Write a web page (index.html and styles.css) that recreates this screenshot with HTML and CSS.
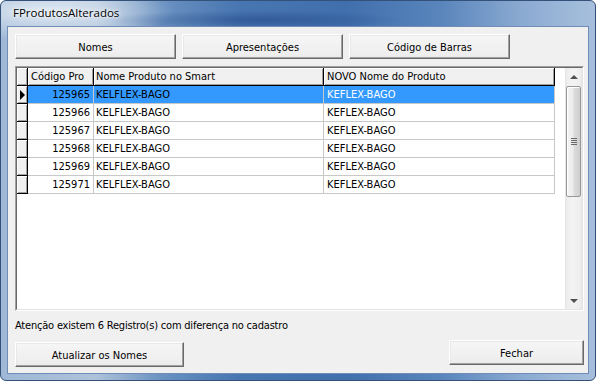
FILE: index.html
```html
<!DOCTYPE html>
<html lang="pt-BR">
<head>
<meta charset="utf-8">
<title>FProdutosAlterados</title>
<link rel="stylesheet" href="styles.css">
</head>
<body>
<div class="window">
  <div class="titlebar">
    <span class="title">FProdutosAlterados</span>
  </div>
  <div class="client">
    <div class="toolbar">
      <button class="btn btn-tab">Nomes</button>
      <button class="btn btn-tab">Apresentações</button>
      <button class="btn btn-tab">Código de Barras</button>
    </div>
    <div class="grid">
      <div class="grid-inner">
        <div class="grid-body">
          <div class="row head">
            <div class="cell ind fixed"></div>
            <div class="cell c-code fixed">Código Pro</div>
            <div class="cell c-name fixed">Nome Produto no Smart</div>
            <div class="cell c-new fixed">NOVO Nome do Produto</div>
          </div>
          <div class="row sel">
            <div class="cell ind fixed"><span class="pointer"></span></div>
            <div class="cell c-code num">125965</div>
            <div class="cell c-name">KELFLEX-BAGO</div>
            <div class="cell c-new">KEFLEX-BAGO</div>
          </div>
          <div class="row">
            <div class="cell ind fixed"></div>
            <div class="cell c-code num">125966</div>
            <div class="cell c-name">KELFLEX-BAGO</div>
            <div class="cell c-new">KEFLEX-BAGO</div>
          </div>
          <div class="row">
            <div class="cell ind fixed"></div>
            <div class="cell c-code num">125967</div>
            <div class="cell c-name">KELFLEX-BAGO</div>
            <div class="cell c-new">KEFLEX-BAGO</div>
          </div>
          <div class="row">
            <div class="cell ind fixed"></div>
            <div class="cell c-code num">125968</div>
            <div class="cell c-name">KELFLEX-BAGO</div>
            <div class="cell c-new">KEFLEX-BAGO</div>
          </div>
          <div class="row">
            <div class="cell ind fixed"></div>
            <div class="cell c-code num">125969</div>
            <div class="cell c-name">KELFLEX-BAGO</div>
            <div class="cell c-new">KEFLEX-BAGO</div>
          </div>
          <div class="row">
            <div class="cell ind fixed"></div>
            <div class="cell c-code num">125971</div>
            <div class="cell c-name">KELFLEX-BAGO</div>
            <div class="cell c-new">KEFLEX-BAGO</div>
          </div>
        </div>
        <div class="vscroll">
          <div class="sb-btn"><span class="arrow-up"></span></div>
          <div class="sb-track">
            <div class="thumb"><span class="grip"></span></div>
          </div>
          <div class="sb-btn"><span class="arrow-down"></span></div>
        </div>
      </div>
    </div>
    <div class="status">Atenção existem 6 Registro(s) com diferença no cadastro</div>
    <div class="bottom">
      <button class="btn btn-update">Atualizar os Nomes</button>
      <button class="btn btn-close">Fechar</button>
    </div>
  </div>
</div>
</body>
</html>
```

FILE: styles.css
```css
html, body {
  margin: 0;
  padding: 0;
}

body {
  width: 596px;
  height: 381px;
  overflow: hidden;
  background: #ffffff;
  font-family: "DejaVu Sans Condensed", "Liberation Sans", sans-serif;
  font-size: 11px;
  color: #000;
}

.window {
  width: 596px;
  height: 381px;
  box-sizing: border-box;
  display: flex;
  flex-direction: column;
  border: 1px solid #34517a;
  border-radius: 6px;
  padding: 0 6px 6px 6px;
  overflow: hidden;
  background:
    radial-gradient(ellipse 150px 10px at 255px 19px, rgba(25, 60, 125, 0.45), rgba(25, 60, 125, 0) 100%),
    radial-gradient(ellipse 130px 30px at 45px 10px, rgba(230, 238, 246, 0.9), rgba(230, 238, 246, 0) 100%),
    linear-gradient(90deg, #9fb8d6 0%, #aec2da 16%, #6a91c1 27%, #4876b1 40%, #416fac 58%, #5985bc 74%, #8cabd2 88%, #a7bfdc 100%);
}

.titlebar {
  height: 25px;
  box-sizing: border-box;
  display: flex;
  align-items: center;
  padding: 0 0 3px 6px;
}

.title {
  font-family: "Open Sans", "Noto Sans", sans-serif;
  font-size: 11.5px;
  color: #000;
  text-shadow: 0 0 6px rgba(255, 255, 255, 0.95), 0 0 3px rgba(255, 255, 255, 0.9);
}

.client {
  flex: 1;
  display: flex;
  flex-direction: column;
  border: 1px solid #6f8db6;
  background: #f0f0f0;
  padding: 0 4px 0 7px;
}

.toolbar {
  display: flex;
  gap: 6px;
  margin-top: 7px;
}

.btn {
  font-family: "DejaVu Sans Condensed", "Liberation Sans", sans-serif;
  font-size: 11px;
  color: #000;
  height: 25px;
  padding: 2px 0 0 0;
  margin: 0;
  box-sizing: border-box;
  border: 1px solid;
  border-color: #ffffff #696969 #696969 #ffffff;
  box-shadow: inset -1px -1px 0 #a0a0a0, inset 1px 1px 0 #e8e8e8;
  background: linear-gradient(#f6f6f6, #ececec);
  border-radius: 0;
}

.btn-tab {
  width: 161px;
}

.grid {
  margin-top: 7px;
  height: 245px;
  box-sizing: border-box;
  border: 1px solid;
  border-color: #a0a0a0 #ffffff #ffffff #a0a0a0;
}

.grid-inner {
  height: 100%;
  box-sizing: border-box;
  border: 1px solid;
  border-color: #696969 #e3e3e3 #e3e3e3 #696969;
  display: flex;
  background: #ffffff;
}

.grid-body {
  flex: 1;
  background: #ffffff;
}

.row {
  display: flex;
  height: 18px;
}

.cell {
  box-sizing: border-box;
  height: 18px;
  line-height: 16px;
  padding: 1px 2px 0 2px;
  border-right: 1px solid #c8c8c8;
  border-bottom: 1px solid #c8c8c8;
  white-space: nowrap;
  overflow: hidden;
}

.fixed {
  background: #f0f0f0;
  border-right-color: #000;
  border-bottom-color: #000;
  box-shadow: inset 1px 1px 0 #ffffff, inset -1px -1px 0 #a0a0a0;
}

.ind {
  width: 11px;
  padding: 0;
  display: flex;
  align-items: center;
  justify-content: center;
}

.c-code {
  width: 66px;
}

.head .c-code {
  padding-left: 3px;
}

.c-name {
  width: 230px;
}

.c-new {
  width: 231px;
  padding-left: 3px;
}

.num {
  text-align: right;
  padding-right: 3px;
}

.sel .cell:not(.fixed) {
  background: #3399ff;
}

.sel .c-new {
  color: #ffffff;
}

.pointer {
  width: 0;
  height: 0;
  border-left: 5px solid #000;
  border-top: 5px solid transparent;
  border-bottom: 5px solid transparent;
  margin-left: 1px;
}

.vscroll {
  width: 17px;
  display: flex;
  flex-direction: column;
  background: linear-gradient(90deg, #e3e3e3 0px, #eeeeee 2px, #f3f3f3 8px, #eeeeee 15px, #e6e6e6 17px);
}

.sb-btn {
  height: 17px;
  display: flex;
  align-items: center;
  justify-content: center;
}

.arrow-up {
  width: 0;
  height: 0;
  border-left: 4px solid transparent;
  border-right: 4px solid transparent;
  border-bottom: 4px solid #505050;
}

.arrow-down {
  width: 0;
  height: 0;
  border-left: 4px solid transparent;
  border-right: 4px solid transparent;
  border-top: 4px solid #505050;
}

.sb-track {
  flex: 1;
  padding-top: 1px;
}

.thumb {
  width: 15px;
  height: 111px;
  margin-left: 1px;
  box-sizing: border-box;
  border: 1px solid #979797;
  border-radius: 2px;
  background: linear-gradient(90deg, #f4f4f4 0%, #ececec 45%, #dcdcdc 55%, #cfcfcf 100%);
  box-shadow: inset 1px 1px 0 #ffffff;
  display: flex;
  align-items: center;
  justify-content: center;
}

.grip {
  width: 6px;
  height: 7px;
  background: repeating-linear-gradient(#6a6a6a 0px, #6a6a6a 1px, transparent 1px, transparent 2px);
}

.status {
  margin-top: 8px;
  height: 14px;
  line-height: 14px;
  white-space: nowrap;
  letter-spacing: -0.2px;
}

.bottom {
  display: flex;
  justify-content: space-between;
  align-items: flex-start;
  margin-top: 7px;
}

.btn-update {
  width: 169px;
  margin-top: 2px;
}

.btn-close {
  width: 135px;
}
```
